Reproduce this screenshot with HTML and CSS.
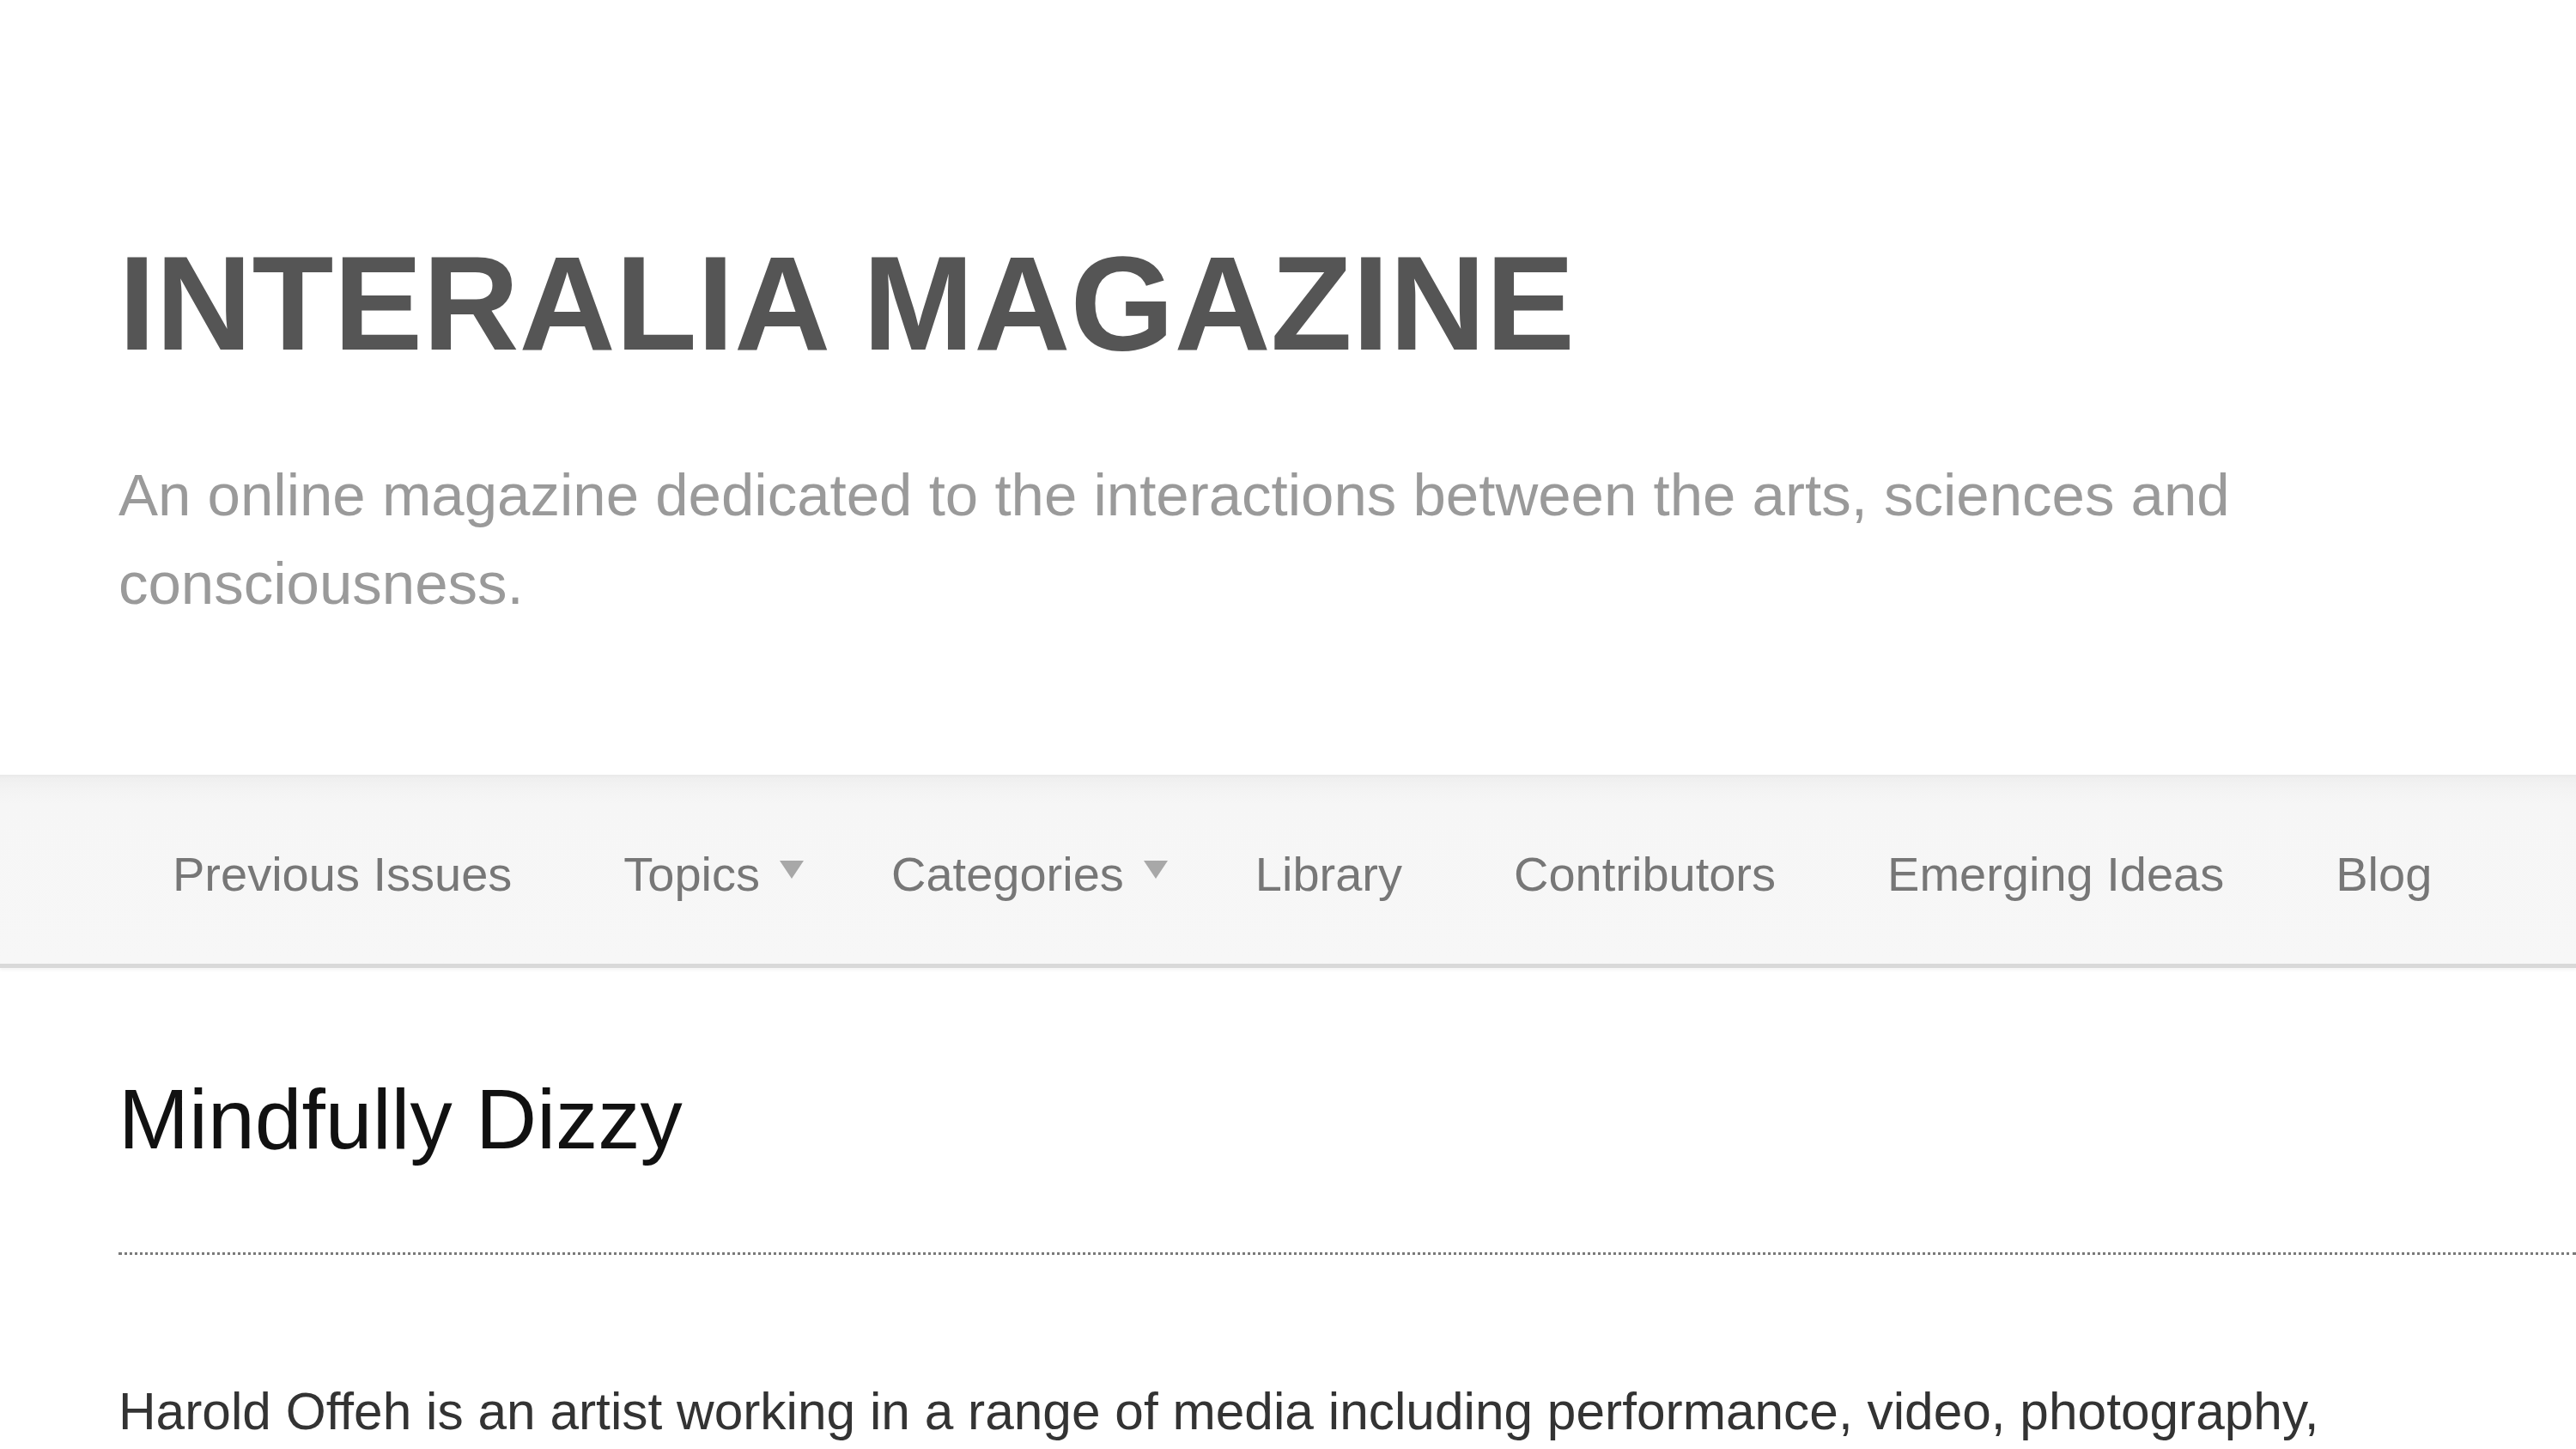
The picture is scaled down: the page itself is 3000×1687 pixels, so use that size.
FILE: index.html
```html
<!DOCTYPE html>
<html lang="en">
<head>
<meta charset="utf-8">
<title>Interalia Magazine – Mindfully Dizzy</title>
<link rel="stylesheet" href="styles.css">
</head>
<body>
<header class="site-header">
  <h1 class="site-title">INTERALIA MAGAZINE</h1>
  <p class="site-tagline">An online magazine dedicated to the interactions between the arts, sciences and consciousness.</p>
</header>
<nav class="main-nav">
  <ul class="menu">
    <li><a class="menu-link" href="#">Previous Issues</a></li>
    <li><a class="menu-link has-sub" href="#">Topics<span class="caret"></span></a></li>
    <li><a class="menu-link has-sub" href="#">Categories<span class="caret"></span></a></li>
    <li><a class="menu-link" href="#">Library</a></li>
    <li><a class="menu-link" href="#">Contributors</a></li>
    <li><a class="menu-link" href="#">Emerging Ideas</a></li>
    <li><a class="menu-link" href="#">Blog</a></li>
  </ul>
</nav>
<main class="content">
  <header class="entry-header">
    <h2 class="entry-title">Mindfully Dizzy</h2>
  </header>
  <div class="entry-body">
    <p>Harold Offeh is an artist working in a range of media including performance, video, photography, learning and social arts practice. Offeh is interested in the inhabiting or embodying of histories.</p>
  </div>
</main>
</body>
</html>
```
FILE: styles.css
```css
html, body {
  margin: 0;
  padding: 0;
  background: #ffffff;
}

body {
  font-family: "Liberation Sans", Arial, Helvetica, sans-serif;
  overflow: hidden;
}

.site-header {
  padding: 261px 138px 0 138px;
}

.site-title {
  margin: 0;
  font-size: 155.5px;
  line-height: 184.8px;
  font-weight: bold;
  color: #555555;
}

.site-tagline {
  margin: 79px 0 0 0;
  max-width: 2640px;
  font-size: 69px;
  line-height: 103px;
  color: #9a9a9a;
}

.main-nav {
  margin-top: 171px;
  box-sizing: content-box;
  height: 67px;
  padding: 82px 0 71px 136px;
  background: linear-gradient(#e9e9e9 0, #efefef 4px, #f3f3f3 16px, #f6f6f6 34px, #f7f7f7 100%);
  border-bottom: 5px solid #d9d9d9;
  box-shadow: 0 3px 3px rgba(0, 0, 0, 0.035);
}

.menu {
  display: flex;
  margin: 0;
  padding: 0;
  list-style: none;
}

.menu-link {
  display: flex;
  align-items: flex-start;
  padding: 0 65px;
  font-size: 56px;
  line-height: 67px;
  color: #777777;
  text-decoration: none;
  white-space: nowrap;
}

.menu-link.has-sub {
  padding-right: 37px;
}

.caret {
  width: 0;
  height: 0;
  margin: 18px 0 0 23px;
  border-left: 14px solid transparent;
  border-right: 14px solid transparent;
  border-top: 21px solid #a8a8a8;
}

.content {
  padding: 0 0 0 138px;
}

.entry-header {
  margin-top: 116px;
  padding-bottom: 95px;
  border-bottom: 3px dotted #7a7a7a;
}

.entry-title {
  margin: 0;
  font-size: 98.5px;
  line-height: 120px;
  font-weight: normal;
  color: #111111;
}

.entry-body p {
  margin: 134px 0 0 0;
  max-width: 2640px;
  font-size: 60.4px;
  line-height: 96px;
  color: #333333;
}
```
